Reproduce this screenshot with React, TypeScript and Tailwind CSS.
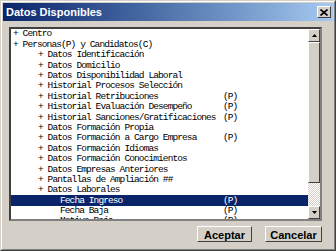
import React from 'react';

type Row = { label: string; level: number; tag?: string; selected?: boolean; plus?: boolean };

const rows: Row[] = [
  { label: 'Centro', level: 0, plus: true },
  { label: 'Personas(P) y Candidatos(C)', level: 0, plus: true },
  { label: 'Datos Identificación', level: 1, plus: true },
  { label: 'Datos Domicilio', level: 1, plus: true },
  { label: 'Datos Disponibilidad Laboral', level: 1, plus: true },
  { label: 'Historial Procesos Selección', level: 1, plus: true },
  { label: 'Historial Retribuciones', level: 1, plus: true, tag: '(P)' },
  { label: 'Historial Evaluación Desempeño', level: 1, plus: true, tag: '(P)' },
  { label: 'Historial Sanciones/Gratificaciones', level: 1, plus: true, tag: '(P)' },
  { label: 'Datos Formación Propia', level: 1, plus: true },
  { label: 'Datos Formación a Cargo Empresa', level: 1, plus: true, tag: '(P)' },
  { label: 'Datos Formación Idiomas', level: 1, plus: true },
  { label: 'Datos Formación Conocimientos', level: 1, plus: true },
  { label: 'Datos Empresas Anteriores', level: 1, plus: true },
  { label: 'Pantallas de Ampliación ##', level: 1, plus: true },
  { label: 'Datos Laborales', level: 1, plus: true },
  { label: 'Fecha Ingreso', level: 2, tag: '(P)', selected: true },
  { label: 'Fecha Baja', level: 2, tag: '(P)' },
  { label: 'Motivo Baja', level: 2, tag: '(P)' },
];

const indent = ['pl-[2px]', 'pl-[27px]', 'pl-[49px]'];

function ListRow({ row }: { row: Row }) {
  return (
    <div
      className={`flex h-[10.4px] shrink-0 items-center whitespace-nowrap ${
        row.selected ? 'bg-[#0a246a] text-white' : 'text-black'
      }`}
    >
      <div className={`w-[212px] shrink-0 ${indent[row.level]}`}>
        {row.plus ? '+ ' : ''}
        {row.label}
      </div>
      {row.tag && <span>{row.tag}</span>}
    </div>
  );
}

function ScrollBar() {
  return (
    <div className="flex w-[12px] shrink-0 flex-col bg-[#ece9e2]">
      <div className="flex h-[13px] items-center justify-center border border-t-white border-l-white border-r-[#404040] border-b-[#404040] bg-[#d4d0c8]">
        <svg width="5" height="3" viewBox="0 0 5 3">
          <path d="M2.5 0 L5 3 L0 3 Z" fill="#000" />
        </svg>
      </div>
      <div className="h-[141px] border border-t-white border-l-white border-r-[#404040] border-b-[#404040] bg-[#d4d0c8]" />
      <div className="flex-1 bg-[repeating-conic-gradient(#ffffff_0_25%,#d4d0c8_0_50%)] bg-[length:2px_2px]" />
      <div className="flex h-[13px] items-center justify-center border border-t-white border-l-white border-r-[#404040] border-b-[#404040] bg-[#d4d0c8]">
        <svg width="5" height="3" viewBox="0 0 5 3">
          <path d="M0 0 L5 0 L2.5 3 Z" fill="#000" />
        </svg>
      </div>
    </div>
  );
}

export default function App() {
  return (
    <div className="h-[251px] w-[336px] overflow-hidden border border-t-[#d4d0c8] border-l-[#d4d0c8] border-r-[#404040] border-b-[#404040] bg-[#d4d0c8] font-['Liberation_Sans',Arial,sans-serif]">
      <div className="flex h-full flex-col border border-t-white border-l-white border-r-[#808080] border-b-[#808080] p-px">
        {/* Title bar */}
        <div className="flex h-[18px] shrink-0 items-center justify-between bg-gradient-to-r from-[#0a246a] to-[#a6caf0] pl-[3px] pr-[2px]">
          <span className="text-[11px] font-bold text-white">Datos Disponibles</span>
          <div className="flex h-[12px] w-[14px] items-center justify-center border border-t-white border-l-white border-r-[#404040] border-b-[#404040] bg-[#d4d0c8]">
            <svg width="8" height="7" viewBox="0 0 8 7">
              <path d="M0.5 0.5 L7.5 6.5 M7.5 0.5 L0.5 6.5" stroke="#000" strokeWidth="1.6" />
            </svg>
          </div>
        </div>

        {/* List box */}
        <div className="ml-[6px] mr-[11px] mt-[6px] flex h-[194px] shrink-0 border-2 border-t-[#404040] border-l-[#404040] border-r-[#808080] border-b-[#808080] bg-white">
          <div className="flex min-w-0 flex-1 flex-col overflow-hidden font-['Liberation_Mono','DejaVu_Sans_Mono',monospace] text-[9.5px] leading-none tracking-[-0.9px]">
            {rows.map((row) => (
              <ListRow key={row.label} row={row} />
            ))}
          </div>
          <ScrollBar />
        </div>

        {/* Buttons */}
        <div className="mr-[11px] mt-[5px] flex justify-end gap-[13px]">
          <button className="h-[16px] w-[55px] border border-t-white border-l-white border-r-[#404040] border-b-[#404040] bg-[#d4d0c8] text-[11px] font-bold text-black">
            Aceptar
          </button>
          <button className="h-[16px] w-[57px] border border-t-white border-l-white border-r-[#404040] border-b-[#404040] bg-[#d4d0c8] text-[11px] font-bold text-black">
            Cancelar
          </button>
        </div>
      </div>
    </div>
  );
}
